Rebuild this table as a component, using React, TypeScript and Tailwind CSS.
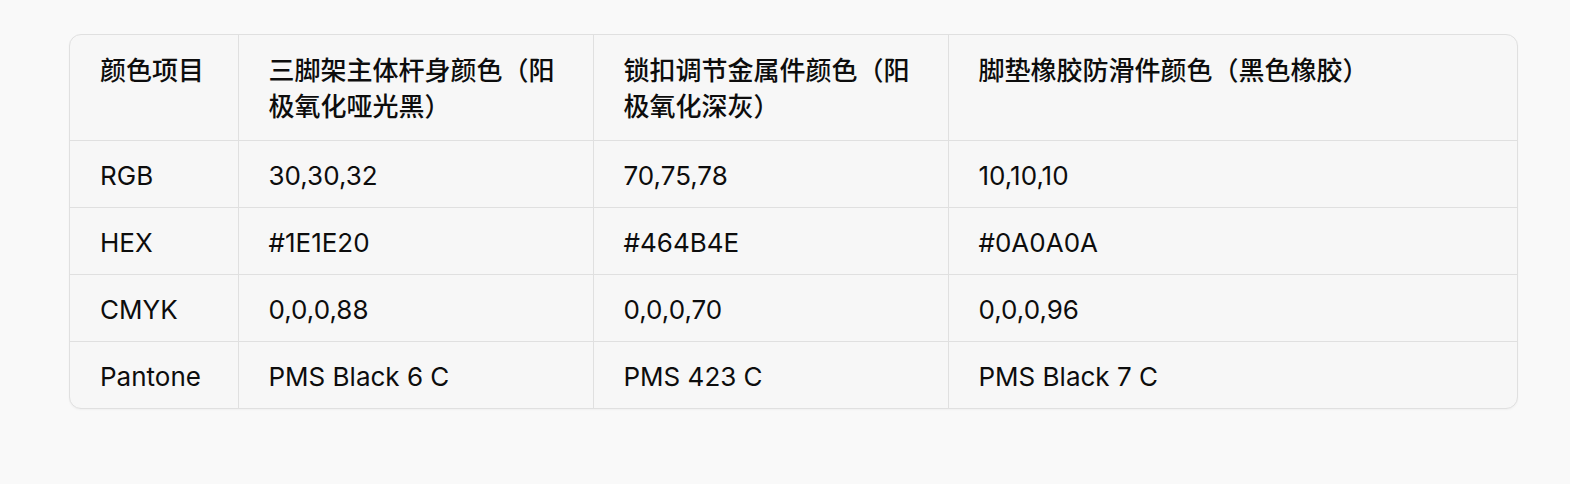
const headers = [
  "颜色项目",
  "三脚架主体杆身颜色（阳极氧化哑光黑）",
  "锁扣调节金属件颜色（阳极氧化深灰）",
  "脚垫橡胶防滑件颜色（黑色橡胶）",
];

const rows = [
  ["RGB", "30,30,32", "70,75,78", "10,10,10"],
  ["HEX", "#1E1E20", "#464B4E", "#0A0A0A"],
  ["CMYK", "0,0,0,88", "0,0,0,70", "0,0,0,96"],
  ["Pantone", "PMS Black 6 C", "PMS 423 C", "PMS Black 7 C"],
];

export default function App() {
  return (
    <div
      className="h-[484px] w-full bg-[#f9f9f9] pt-[34px] pl-[69px]"
      style={{ fontFamily: '"Inter", "Noto Sans CJK SC", sans-serif' }}
    >
      <div className="w-[1449px] overflow-hidden rounded-[12px] border border-[#e0e0e0] bg-[#f7f7f7] shadow-[0_1px_2px_rgba(0,0,0,0.04)]">
        <table className="w-full table-fixed border-collapse text-[26px] leading-[36px] text-[#0d0d0d]">
          <colgroup>
            <col className="w-[168px]" />
            <col className="w-[355px]" />
            <col className="w-[355px]" />
            <col />
          </colgroup>
          <thead>
            <tr className="border-b border-[#e0e0e0]">
              {headers.map((h, i) => (
                <th
                  key={h}
                  className={`px-[30px] pt-[18px] pb-[15px] text-left align-top font-medium ${i > 0 ? "border-l border-[#e0e0e0]" : ""}`}
                >
                  {h}
                </th>
              ))}
            </tr>
          </thead>
          <tbody>
            {rows.map((r, ri) => (
              <tr key={r[0]} className={ri < rows.length - 1 ? "border-b border-[#e0e0e0]" : ""}>
                {r.map((c, i) => (
                  <td
                    key={i}
                    className={`px-[30px] pt-[17px] pb-[13px] align-middle ${i > 0 ? "border-l border-[#e0e0e0]" : ""}`}
                  >
                    {c}
                  </td>
                ))}
              </tr>
            ))}
          </tbody>
        </table>
      </div>
    </div>
  );
}
